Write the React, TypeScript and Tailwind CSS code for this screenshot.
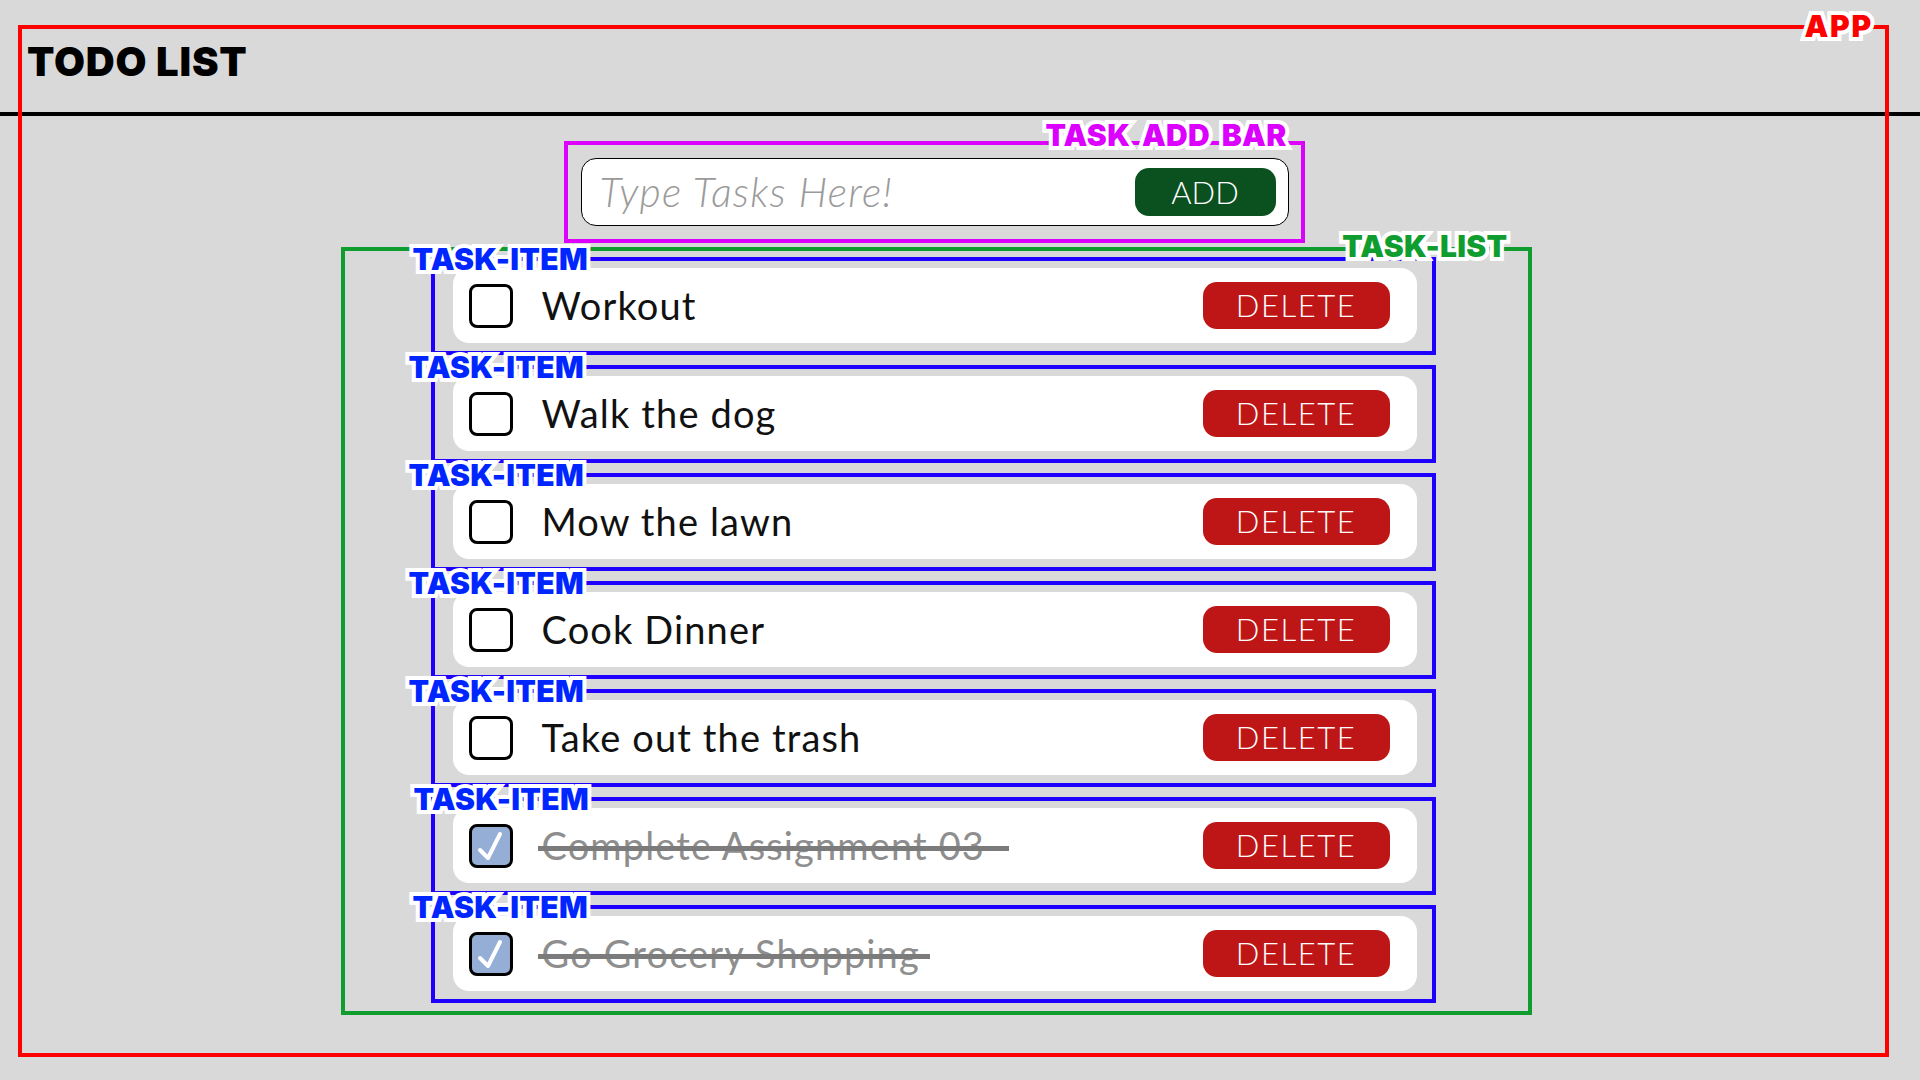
import React, { useState } from 'react';

interface Task {
  id: number;
  text: string;
  done: boolean;
  strike?: string;
  shift?: string;
}

const START: Task[] = [
  { id: 1, text: 'Workout', done: false, shift: '-left-[22px]' },
  { id: 2, text: 'Walk the dog', done: false },
  { id: 3, text: 'Mow the lawn', done: false },
  { id: 4, text: 'Cook Dinner', done: false },
  { id: 5, text: 'Take out the trash', done: false },
  { id: 6, text: 'Complete Assignment 03', done: true, strike: '-right-[24px]', shift: '-left-[21px]' },
  { id: 7, text: 'Go Grocery Shopping', done: true, strike: '-right-[10px]', shift: '-left-[22px]' },
];

// annotation label: heavy caps with a white outline, sitting on a frame edge
const label =
  "absolute z-10 whitespace-nowrap font-['Inter',sans-serif] text-[30px] font-black leading-none tracking-[0.01em] [-webkit-text-stroke:8px_white] [paint-order:stroke_fill]";

const TaskItem: React.FC<{ task: Task; onToggle: () => void; onDelete: () => void }> = ({ task, onToggle, onDelete }) => {
  return (
    <div className="relative border-4 border-[#1f00ff] pt-[7px] pb-[8px] pl-[18px] pr-[15px]">
      <span className={`${label} top-[-17px] ${task.shift ?? '-left-[26px]'} text-[#0026ff]`}>TASK-ITEM</span>
      <div className="flex h-[75px] items-center rounded-[16px] bg-white pl-[16px] pr-[27px]">
        <button
          type="button"
          onClick={onToggle}
          className={`flex h-[44px] w-[44px] shrink-0 items-center justify-center rounded-[8px] border-[3px] border-black ${task.done ? 'bg-[#95aed6]' : 'bg-white'}`}
        >
          {task.done && (
            <svg viewBox="0 0 38 38" className="h-[38px] w-[38px]">
              <polyline points="8,23 16,31 28,7" fill="none" stroke="white" strokeWidth="4" strokeLinecap="round" strokeLinejoin="round" />
            </svg>
          )}
        </button>
        <span
          className={`relative ml-[29px] font-['Lato',sans-serif] text-[38px] tracking-[0.03em] ${task.done ? 'text-[#8e8e8e]' : 'text-[#111]'}`}
        >
          {task.text}
          {task.done && (
            <span className={`absolute top-1/2 left-[-4px] h-[5px] bg-[#7b7b7b] ${task.strike ?? 'right-0'}`} />
          )}
        </span>
        <button
          type="button"
          onClick={onDelete}
          className="ml-auto flex h-[47px] w-[187px] items-center justify-center rounded-[14px] bg-[#be1616] font-['Lato',sans-serif] text-[31px] font-light tracking-[0.05em] text-white"
        >
          DELETE
        </button>
      </div>
    </div>
  );
};

export default function App() {
  const [tasks, setTasks] = useState<Task[]>(START);
  const [draft, setDraft] = useState('');

  const addTask = (e: React.FormEvent) => {
    e.preventDefault();
    const text = draft.trim();
    if (!text) return;
    setTasks([...tasks, { id: Date.now(), text, done: false }]);
    setDraft('');
  };

  return (
    <div className="relative min-h-screen bg-[#d9d9d9]">
      <header className="h-[116px] border-b-4 border-black pl-[27px] pt-[42px]">
        <h1 className="font-['Inter',sans-serif] text-[40px] font-black leading-none tracking-[0.02em] text-black">TODO LIST</h1>
      </header>

      <main className="flex flex-col items-center pr-[48px] pt-[25px]">
        {/* add bar */}
        <form onSubmit={addTask} className="relative mr-[4px] w-[741px] border-4 border-[#dc00ff] p-[13px] pr-[12px]">
          <span className={`${label} top-[-25px] right-[14px] text-[#dc00ff] [word-spacing:0.18em]`}>TASK ADD BAR</span>
          <div className="flex h-[68px] items-center rounded-[15px] border border-black bg-white pl-[18px] pr-[12px]">
            <input
              value={draft}
              onChange={(e) => setDraft(e.target.value)}
              placeholder="Type Tasks Here!"
              className="min-w-0 flex-1 bg-transparent font-['Lato',sans-serif] text-[41px] font-light italic tracking-[0.03em] text-[#222] outline-none placeholder:text-[#9a9a9a]"
            />
            <button
              type="submit"
              className="flex h-[48px] w-[141px] items-center justify-center rounded-[14px] bg-[#0b501f] font-['Lato',sans-serif] text-[31px] font-light text-white"
            >
              ADD
            </button>
          </div>
        </form>

        {/* list */}
        <section className="relative mt-[4px] flex w-[1191px] flex-col gap-[10px] border-4 border-[#0f9d2f] pt-[6px] pb-[8px] pl-[86px] pr-[92px]">
          <span className={`${label} top-[-20px] right-[20px] text-[#0f9d2f]`}>TASK-LIST</span>
          {tasks.map((t) => (
            <TaskItem
              key={t.id}
              task={t}
              onToggle={() => setTasks(tasks.map((x) => (x.id === t.id ? { ...x, done: !x.done } : x)))}
              onDelete={() => setTasks(tasks.filter((x) => x.id !== t.id))}
            />
          ))}
        </section>
      </main>

      {/* APP frame */}
      <div className="pointer-events-none absolute top-[25px] left-[18px] z-20 h-[1032px] w-[1871px] border-4 border-[#ff0000]">
        <span className={`${label} top-[-18px] right-[12px] text-[#ff0000] tracking-[0.06em]`}>APP</span>
      </div>
    </div>
  );
}
